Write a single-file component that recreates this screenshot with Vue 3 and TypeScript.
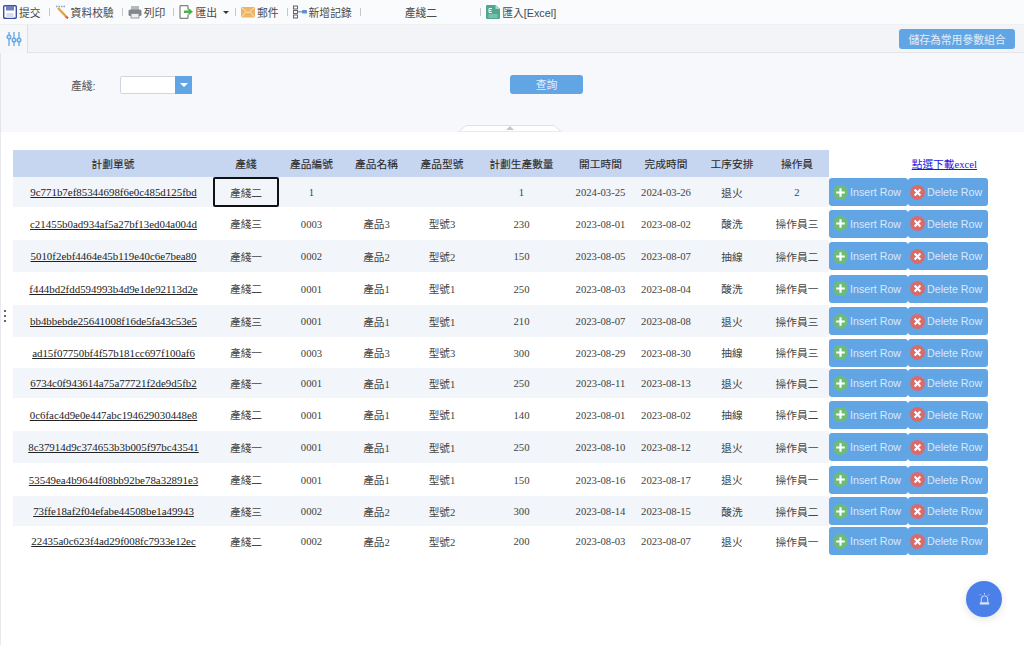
<script setup lang="ts">
interface PlanRow {
  id: string;
  line: string;
  code: string;
  name: string;
  model: string;
  qty: string;
  start: string;
  end: string;
  step: string;
  worker: string;
  height: number;
}

const headers = ["計劃單號", "產綫", "產品編號", "產品名稱", "產品型號", "計劃生產數量", "開工時間", "完成時間", "工序安排", "操作員"];
const colWidths = [200, 66, 65, 65, 66, 93, 65, 66, 66, 64];

function row(id: string, line: string, code: string, name: string, model: string, qty: string, start: string, end: string, step: string, worker: string, height: number): PlanRow {
  return { id, line, code, name, model, qty, start, end, step, worker, height };
}

const rows: PlanRow[] = [
  row("9c771b7ef85344698f6e0c485d125fbd", "產綫二", "1", "", "", "1", "2024-03-25", "2024-03-26", "退火", "2", 30),
  row("c21455b0ad934af5a27bf13ed04a004d", "產綫三", "0003", "產品3", "型號3", "230", "2023-08-01", "2023-08-02", "酸洗", "操作員三", 33),
  row("5010f2ebf4464e45b119e40c6e7bea80", "產綫一", "0002", "產品2", "型號2", "150", "2023-08-05", "2023-08-07", "抽線", "操作員二", 32),
  row("f444bd2fdd594993b4d9e1de92113d2e", "產綫二", "0001", "產品1", "型號1", "250", "2023-08-03", "2023-08-04", "酸洗", "操作員一", 33),
  row("bb4bbebde25641008f16de5fa43c53e5", "產綫三", "0001", "產品1", "型號1", "210", "2023-08-07", "2023-08-08", "退火", "操作員三", 32),
  row("ad15f07750bf4f57b181cc697f100af6", "產綫一", "0003", "產品3", "型號3", "300", "2023-08-29", "2023-08-30", "抽線", "操作員三", 31),
  row("6734c0f943614a75a77721f2de9d5fb2", "產綫一", "0001", "產品1", "型號1", "250", "2023-08-11", "2023-08-13", "退火", "操作員二", 30),
  row("0c6fac4d9e0e447abc194629030448e8", "產綫二", "0001", "產品1", "型號1", "140", "2023-08-01", "2023-08-02", "抽線", "操作員二", 33),
  row("8c37914d9c374653b3b005f97bc43541", "產綫一", "0001", "產品1", "型號1", "250", "2023-08-10", "2023-08-12", "退火", "操作員一", 32),
  row("53549ea4b9644f08bb92be78a32891e3", "產綫二", "0001", "產品1", "型號1", "150", "2023-08-16", "2023-08-17", "退火", "操作員一", 33),
  row("73ffe18af2f04efabe44508be1a49943", "產綫三", "0002", "產品2", "型號2", "300", "2023-08-14", "2023-08-15", "酸洗", "操作員二", 30),
  row("22435a0c623f4ad29f008fc7933e12ec", "產綫二", "0002", "產品2", "型號2", "200", "2023-08-03", "2023-08-07", "退火", "操作員一", 30),
];
</script>

<template>
  <div class="page">
    <div class="toolbar">
      <span class="tool">
        <svg class="ico" viewBox="0 0 14 14"><rect x="0.7" y="0.7" width="12.6" height="12.6" rx="1" fill="#fff" stroke="#3d4f9f" stroke-width="1.4" /><rect x="3" y="1" width="8" height="4.5" fill="#6f7fc4" /><rect x="3.5" y="8" width="7" height="5" fill="#d8dcf0" /></svg>
        提交
      </span>
      <i class="sep"></i>
      <span class="tool">
        <svg class="ico" viewBox="0 0 14 14"><path d="M1 1.5h9" stroke="#8f9ac8" stroke-width="1.4" stroke-dasharray="1.5 1" /><path d="M3 3l8.5 9" stroke="#e8a23a" stroke-width="2.4" /><path d="M11 11.5l2 2" stroke="#d9534f" stroke-width="2" /></svg>
        資料校驗
      </span>
      <i class="sep"></i>
      <span class="tool">
        <svg class="ico" viewBox="0 0 14 14"><rect x="3" y="1" width="8" height="4" fill="#b5b8bd" /><rect x="0.5" y="4.5" width="13" height="6.5" rx="1.5" fill="#83878d" /><rect x="3" y="8.5" width="8" height="4.5" fill="#eceef0" stroke="#83878d" stroke-width="0.8" /></svg>
        列印
      </span>
      <i class="sep"></i>
      <span class="tool">
        <svg class="ico" viewBox="0 0 14 14"><path d="M1 .7h8v4M9 9.500v3.800H1V.7" fill="#fff" stroke="#666" stroke-width="1" /><path d="M5 5.500h4.500V3L14 6.700l-4.500 3.600V8H5z" fill="#4caf50" /></svg>
        匯出
        <i class="caret"></i>
      </span>
      <i class="sep sep-after-caret"></i>
      <span class="tool">
        <svg class="ico" viewBox="0 0 14 14"><rect x="0" y="2" width="14" height="10.500" rx="1" fill="#eeb565" /><path d="M0.500 2.500L7 8l6.500-5.500M0.500 12l4.500-5M13.500 12L9 7" fill="none" stroke="#fbe3bd" stroke-width="1" /></svg>
        郵件
      </span>
      <i class="sep"></i>
      <span class="tool">
        <svg class="ico" viewBox="0 0 14 14"><g fill="none" stroke="#555" stroke-width="0.9"><rect x="0.500" y="1" width="4" height="3" /><rect x="0.500" y="5.500" width="4" height="3" /><rect x="0.500" y="10" width="4" height="3" /></g><rect x="9" y="5" width="5" height="3.500" rx="0.800" fill="#5c8fd6" /><path d="M5 6.800h4" stroke="#5c8fd6" stroke-width="1.200" /></svg>
        新增記錄
      </span>
      <i class="sep"></i>
      <span class="tool current">產綫二</span>
      <i class="sep"></i>
      <span class="tool">
        <svg class="ico" viewBox="0 0 14 14"><path d="M1 0h8.500L14 4v9a1 1 0 0 1-1 1H1a1 1 0 0 1-1-1V1a1 1 0 0 1 1-1z" fill="#4fa88e" /><path d="M9.500 0L14 4H9.500z" fill="#a5d8c8" /><path d="M3 3.500h3M3 3.500v4M3 5.500h2.500M3 7.500h3" stroke="#fff" stroke-width="0.900" fill="none" /><path d="M2.500 10h9M2.500 12h9" stroke="#a5d8c8" stroke-width="1" /></svg>
        匯入[Excel]
      </span>
    </div>

    <div class="tabbar">
      <div class="tab">
        <svg width="16" height="16" viewBox="0 0 16 16" fill="none" stroke="#62a5e5" stroke-width="1.300">
          <path d="M3 1v14M8 1v14M13 1v14" />
          <g fill="#cfe2f6"><circle cx="3" cy="6" r="1.900" /><circle cx="8" cy="9" r="1.900" /><circle cx="13" cy="9" r="1.900" /></g>
        </svg>
      </div>
      <button class="btn save">儲存為常用參數組合</button>
    </div>

    <div class="filter">
      <label class="filter-label">產綫:</label>
      <div class="select">
        <div class="select-box"></div>
        <div class="select-arrow"><i></i></div>
      </div>
      <button class="btn query">查詢</button>
      <svg class="collapse" width="104" height="7" viewBox="0 0 104 7">
        <path d="M0.500 7L8 0.500H96L103.500 7" fill="#fff" stroke="#dfe1e5" />
        <path d="M48 5L52 1L56 5z" fill="#c4c7cc" />
        <path d="M0 6.500H104" stroke="#e8eaee" />
      </svg>
    </div>

    <div class="content">
      <table class="plan">
        <colgroup>
          <col v-for="(w, i) in colWidths" :key="i" :style="{ width: w + 'px' }" />
          <col class="c-btn" />
          <col class="c-btn2" />
        </colgroup>
        <thead>
          <tr>
            <th v-for="h in headers" :key="h">{{ h }}</th>
            <th colspan="2" class="link-cell"><a href="#">點選下載excel</a></th>
          </tr>
        </thead>
        <tbody>
          <tr v-for="(r, i) in rows" :key="r.id" :style="{ height: r.height + 'px' }">
            <td class="id-cell"><a href="#" class="plan-link">{{ r.id }}</a></td>
            <td :class="{ selected: i === 0 }">{{ r.line }}</td>
            <td>{{ r.code }}</td>
            <td>{{ r.name }}</td>
            <td>{{ r.model }}</td>
            <td>{{ r.qty }}</td>
            <td>{{ r.start }}</td>
            <td>{{ r.end }}</td>
            <td>{{ r.step }}</td>
            <td>{{ r.worker }}</td>
            <td class="act">
              <button class="row-btn">
                <svg class="round" viewBox="0 0 14 14"><circle cx="7" cy="7" r="7" fill="#6cbb78" /><path d="M7 3v8M3 7h8" stroke="#fff" stroke-width="2" /></svg>
                Insert Row
              </button>
            </td>
            <td class="act">
              <button class="row-btn del">
                <svg class="round" viewBox="0 0 14 14"><circle cx="7" cy="7" r="7" fill="#d86b6b" /><path d="M4.300 4.300l5.400 5.400M9.700 4.300l-5.400 5.400" stroke="#fff" stroke-width="2" /></svg>
                Delete Row
              </button>
            </td>
          </tr>
        </tbody>
      </table>
    </div>

    <div class="dots"><i></i><i></i><i></i></div>

    <div class="fab">
      <svg width="13" height="14" viewBox="0 0 14 14" fill="none" stroke="#d6e3fb" stroke-width="1">
        <path d="M3.500 11V7a3.500 3.500 0 0 1 7 0v4" />
        <rect x="2" y="10.500" width="10" height="2.500" fill="#d6e3fb" stroke="none" />
        <path d="M7 .5v1.500M2 2l1.200 1.200M12 2l-1.200 1.200" />
      </svg>
    </div>
  </div>
</template>

<style scoped>
.page {
  position: relative;
  width: 1024px;
  height: 645px;
  overflow: hidden;
  background: #fff;
  color: #333;
  font-family: "Liberation Sans", "Noto Sans CJK TC", sans-serif;
}

.toolbar {
  display: flex;
  align-items: center;
  height: 24px;
  padding-left: 3px;
  background: #fafbfc;
  font-size: 10.8px;
  color: #4a4a4a;
}

.tool {
  display: flex;
  align-items: center;
  gap: 2px;
  white-space: nowrap;
}

.current {
  padding: 0 35px 0 39px;
}

.ico {
  width: 14px;
  height: 14px;
  flex: none;
}

.sep {
  width: 1px;
  height: 8px;
  margin: 0 5px 0 8px;
  background: #c4c7cc;
}

.sep-after-caret {
  margin-left: 6px;
}

.caret {
  margin-left: 4px;
  border-left: 3px solid transparent;
  border-right: 3px solid transparent;
  border-top: 3px solid #333;
}

.tabbar {
  display: flex;
  align-items: center;
  justify-content: space-between;
  height: 27px;
  padding-right: 9px;
  background: #f2f4f8;
  border-top: 1px solid #eff0f2;
  border-bottom: 1px solid #e3e5e9;
}

.tab {
  display: flex;
  align-items: center;
  justify-content: center;
  width: 28px;
  height: 28px;
  margin-bottom: -1px;
  background: #f6f7f9;
  border-right: 1px solid #dcdfe4;
  box-sizing: border-box;
}

.btn {
  border: 0;
  border-radius: 3px;
  background: #62a5e5;
  color: #e3effa;
  font-family: inherit;
  padding: 0;
}

.save {
  width: 116px;
  height: 20px;
  font-size: 10.8px;
}

.filter {
  position: relative;
  display: flex;
  align-items: center;
  height: 79px;
  padding: 0 0 15px 70px;
  background: #f6f8fb;
  box-sizing: border-box;
  border-left: 1px solid #e3e5e9;
}

.filter-label {
  width: 49px;
  font-size: 10.8px;
  color: #555;
}

.select {
  display: flex;
  width: 72px;
  height: 18px;
  border: 1px solid #d2d5de;
  box-sizing: border-box;
  background: #fff;
  border-radius: 2px;
}

.select-box {
  flex: 1;
}

.select-arrow {
  display: flex;
  align-items: center;
  justify-content: center;
  width: 17px;
  margin: -1px -1px -1px 0;
  background: #62a5e5;
}

.select-arrow i {
  border-left: 4px solid transparent;
  border-right: 4px solid transparent;
  border-top: 4px solid #fff;
}

.query {
  width: 73px;
  height: 19px;
  margin-left: 318px;
  margin-top: -2px;
  font-size: 10.8px;
}

.collapse {
  position: absolute;
  left: 457px;
  bottom: 0;
}

.content {
  padding: 18px 0 0 12px;
  border-left: 1px solid #e8eaee;
  height: 513px;
  box-sizing: border-box;
}

.plan {
  width: 975px;
  table-layout: fixed;
  border-collapse: collapse;
  font-family: "Liberation Serif", "Noto Sans CJK TC", serif;
  font-size: 10.7px;
  color: #444;
}

.c-btn {
  width: 79px;
}

.c-btn2 {
  width: 80px;
}

.plan th {
  height: 27px;
  padding: 0;
  background: #c6d5f0;
  font-weight: 400;
  color: #2a2a2a;
  -webkit-text-stroke: 0.1px #2a2a2a;
}

.plan th.link-cell {
  background: #fff;
  text-align: right;
  padding-right: 11px;
  -webkit-text-stroke: 0;
}

.link-cell a {
  color: #1a1ae0;
}

.plan td {
  padding: 0;
  text-align: center;
}

.plan td.id-cell {
  padding-left: 1px;
}

.plan tbody tr:nth-child(odd) td {
  background: #f2f5f9;
}

.plan tbody tr td.act {
  background: #fff;
}

.plan-link {
  color: #222;
  font-size: 10.9px;
}

.plan td.selected {
  box-shadow: inset 0 0 0 2px #111;
  border-radius: 2px;
}

.row-btn {
  display: flex;
  align-items: center;
  gap: 2px;
  width: 100%;
  height: calc(100% - 2px);
  min-height: 28px;
  margin: 1px 0;
  padding: 0 0 0 4px;
  border: 0;
  border-radius: 3px;
  background: #62a5e5;
  color: #d9e8f8;
  font-family: "Liberation Sans", sans-serif;
  font-size: 10.7px;
  white-space: nowrap;
}

.del {
  padding-left: 2px;
}

.round {
  width: 15px;
  height: 15px;
  flex: none;
}

.dots {
  position: absolute;
  left: 4px;
  top: 310px;
  display: flex;
  flex-direction: column;
  gap: 3px;
}

.dots i {
  width: 2px;
  height: 2px;
  background: #666;
}

.fab {
  position: absolute;
  left: 966px;
  top: 581px;
  display: flex;
  align-items: center;
  justify-content: center;
  width: 36px;
  height: 36px;
  border-radius: 50%;
  background: #4a80e8;
  box-shadow: 0 2px 8px rgba(0, 0, 0, 0.12);
}
</style>
